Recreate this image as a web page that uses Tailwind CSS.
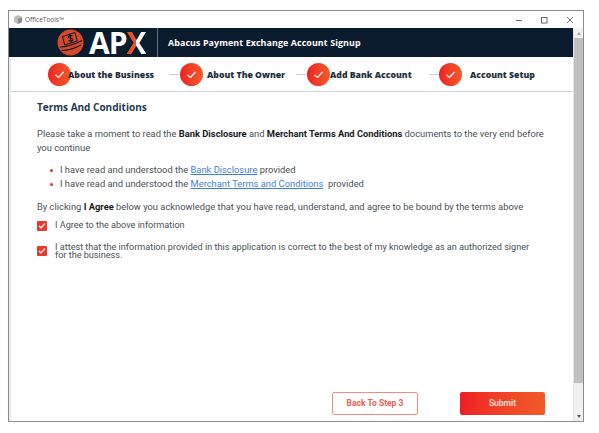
<!DOCTYPE html>
<html lang="en">
<head>
<meta charset="utf-8">
<title>OfficeTools</title>
<script src="https://cdn.jsdelivr.net/npm/@tailwindcss/browser@4"></script>
</head>
<body class="bg-white font-['Roboto',sans-serif] overflow-hidden">
<div class="w-[599px] h-[433px] pt-[10px] pl-[8px]">
  <!-- window -->
  <div class="w-[576px] h-[412px] border border-[#8a8a8a] border-b-[#8f8f8f] flex flex-col bg-white">
    <!-- title bar -->
    <div class="h-[17px] flex items-center shrink-0">
      <svg class="ml-[4px] w-[10px] h-[11px]" viewBox="0 0 10 11"><path d="M1 3 5 1l4 2v5l-4 2-4-2z" fill="#bdbdbd"/><path d="M5 5v5l4-2V3z" fill="#8c8c8c"/></svg>
      <span class="ml-[2px] text-[6.500px] text-[#555] font-['Open_Sans',sans-serif]">OfficeTools™</span>
      <div class="ml-auto flex items-center">
        <svg class="w-[8px] h-[8px] mr-[17px]" viewBox="0 0 8 8"><path d="M1 4.500h6" stroke="#666" stroke-width="1"/></svg>
        <svg class="w-[8px] h-[8px] mr-[18px]" viewBox="0 0 8 8"><rect x="1.500" y="1.500" width="5.500" height="5.500" fill="none" stroke="#666" stroke-width="1"/></svg>
        <svg class="w-[8px] h-[8px] mr-[9px]" viewBox="0 0 8 8"><path d="M1 1l6 6M7 1 1 7" stroke="#666" stroke-width=".9"/></svg>
      </div>
    </div>
    <div class="flex flex-1 min-h-0">
      <!-- main -->
      <div class="flex-1 min-w-0 flex flex-col border-l-2 border-[#e3edf3]">
        <div class="h-[29px] bg-[#0a1c2e] flex items-center shrink-0 -ml-[2px]">
          <svg class="ml-[48px] w-[27px] h-[27px] shrink-0" viewBox="0 0 27 27">
            <circle cx="13.500" cy="13.500" r="13" fill="#d9472a"/>
            <path d="M5.500 7.500 18 3.500l2.200 8.500-12.500 4z" fill="none" stroke="#0a1c2e" stroke-width="1"/>
            <path d="M15.500 7c-1.500-1-4.500-.3-4.300 1 .3 1.700 4.500 .7 4.800 2.500 .2 1.300-2.800 2-4.500 1M13 4.500l1.200 9" stroke="#0a1c2e" stroke-width="1.100" fill="none"/>
            <path d="M3 18c6 0 13-2 22-6.500M4.500 21.500c6 0 13-2 19.500-5.500" stroke="#0a1c2e" stroke-width="1.100" fill="none"/>
          </svg>
          <span class="ml-[5px] w-[58px] text-[30px] leading-[28px] font-bold font-['Open_Sans',sans-serif] text-white tracking-[-1px]">AP<span class="bg-linear-to-r from-[#e8512a] from-50% to-white to-50% bg-clip-text text-transparent">X</span></span>
          <div class="ml-[10px] w-px h-full bg-[#66727d]"></div>
          <span class="ml-[10px] text-[8.900px] font-bold text-white font-['Open_Sans',sans-serif] tracking-[0.1px]">Abacus Payment Exchange Account Signup</span>
        </div>
        <!-- steps -->
        <div class="h-[35px] border-b border-[#ccd5dc] flex items-center shrink-0 pl-[37px] text-[#1f3040] text-[8.700px] font-extrabold font-['Open_Sans',sans-serif]">
          <div class="flex items-center w-[121px]">
            <span class="w-[23px] h-[23px] rounded-full bg-linear-to-r from-[#ee1c25] to-[#f15a29] flex items-center justify-center shrink-0"><svg class="w-[11px] h-[11px]" viewBox="0 0 11 11"><path d="M1.500 6l3 2.500L9.500 3" stroke="#fff" stroke-width="1.200" fill="none"/></svg></span>
            <span class="-ml-[3px] mt-[3px] whitespace-nowrap">About the Business</span>
          </div>
          <div class="mr-px w-[10px] h-px bg-[#c5d0d8]"></div>
          <div class="flex items-center w-[116px]">
            <span class="w-[23px] h-[23px] rounded-full bg-linear-to-r from-[#ee1c25] to-[#f15a29] flex items-center justify-center shrink-0"><svg class="w-[11px] h-[11px]" viewBox="0 0 11 11"><path d="M1.500 6l3 2.500L9.500 3" stroke="#fff" stroke-width="1.200" fill="none"/></svg></span>
            <span class="ml-[4px] mt-[3px] whitespace-nowrap">About The Owner</span>
          </div>
          <div class="mr-px w-[10px] h-px bg-[#c5d0d8]"></div>
          <div class="flex items-center w-[122px]">
            <span class="w-[23px] h-[23px] rounded-full bg-linear-to-r from-[#ee1c25] to-[#f15a29] flex items-center justify-center shrink-0"><svg class="w-[11px] h-[11px]" viewBox="0 0 11 11"><path d="M1.500 6l3 2.500L9.500 3" stroke="#fff" stroke-width="1.200" fill="none"/></svg></span>
            <span class="mt-[3px] whitespace-nowrap">Add Bank Account</span>
          </div>
          <div class="w-[10px] h-px bg-[#c5d0d8]"></div>
          <div class="flex items-center">
            <span class="w-[23px] h-[23px] rounded-full bg-linear-to-r from-[#ee1c25] to-[#f15a29] flex items-center justify-center shrink-0"><svg class="w-[11px] h-[11px]" viewBox="0 0 11 11"><path d="M1.500 6l3 2.500L9.500 3" stroke="#fff" stroke-width="1.200" fill="none"/></svg></span>
            <span class="ml-[8px] mt-[3px] whitespace-nowrap">Account Setup</span>
          </div>
        </div>
        <!-- content -->
        <div class="flex-1 min-h-0 flex flex-col pl-[26px] text-[#4a4f55] text-[9.350px]">
          <h2 class="mt-[8px] text-[#1f3a52] text-[10px] leading-[14px] font-bold font-['Open_Sans',sans-serif]">Terms And Conditions</h2>
          <p class="mt-[13px] leading-[14px] w-[510px]">Please take a moment to read the <b class="text-[#16191d] font-bold">Bank Disclosure</b> and <b class="text-[#16191d] font-bold">Merchant Terms And Conditions</b> documents to the very end before you continue</p>
          <ul class="mt-[8px] leading-[14px]">
            <li class="flex items-center"><span class="ml-[13px] w-[3px] h-[3px] rounded-full bg-[#e8302a]"></span><span class="ml-[7px]">I have read and understood the <a class="text-[#3f7fd8] underline">Bank Disclosure</a> provided</span></li>
            <li class="flex items-center"><span class="ml-[13px] w-[3px] h-[3px] rounded-full bg-[#e8302a]"></span><span class="ml-[7px] whitespace-pre">I have read and understood the <a class="text-[#3f7fd8] underline">Merchant Terms and Conditions</a>  provided</span></li>
          </ul>
          <p class="mt-[9px] leading-[14px]">By clicking <b class="text-[#16191d] font-bold">I Agree</b> below you acknowledge that you have read, understand, and agree to be bound by the terms above</p>
          <div class="mt-[5px] flex items-center h-[14px]">
            <span class="w-[10px] h-[10px] rounded-[1px] bg-[#e8392c] flex items-center justify-center shrink-0"><svg class="w-[8px] h-[8px]" viewBox="0 0 8 8"><path d="M1 4l2 2 4-4.500" stroke="#fff" stroke-width="1.200" fill="none"/></svg></span>
            <span class="ml-[8px] text-[9.100px]">I Agree to the above information</span>
          </div>
          <div class="mt-[10px] flex items-center">
            <span class="w-[10px] h-[10px] rounded-[1px] bg-[#e8392c] flex items-center justify-center shrink-0"><svg class="w-[8px] h-[8px]" viewBox="0 0 8 8"><path d="M1 4l2 2 4-4.500" stroke="#fff" stroke-width="1.200" fill="none"/></svg></span>
            <span class="ml-[8px] w-[485px] leading-[8px] text-[9.100px]">I attest that the information provided in this application is correct to the best of my knowledge as an authorized signer for the business.</span>
          </div>
          <div class="mt-auto mb-[6px] flex text-[8.500px] font-bold">
            <button class="ml-[295px] w-[86px] h-[23px] border border-[#f58b7d] rounded-[2px] text-[#e8604f]">Back To Step 3</button>
            <button class="ml-[42px] w-[85px] h-[23px] rounded-[2px] font-medium text-[#ffe9e2] bg-linear-to-r from-[#ee1c25] to-[#f15a29]">Submit</button>
          </div>
        </div>
      </div>
      <!-- scrollbar -->
      <div class="w-[10px] shrink-0 bg-[#f0f0f0] flex flex-col items-center border-l border-[#e6e6e6]">
        <div class="h-[10px] shrink-0 flex items-center justify-center"><span class="border-x-[2.500px] border-x-transparent border-b-[3px] border-b-[#a8a8a8]"></span></div>
        <div class="w-full h-[345px] bg-[#c0c0c0]"></div>
        <div class="mt-auto h-[10px] shrink-0 flex items-center justify-center"><span class="border-x-[2.500px] border-x-transparent border-t-[3px] border-t-[#555]"></span></div>
      </div>
    </div>
  </div>
</div>
</body>
</html>
